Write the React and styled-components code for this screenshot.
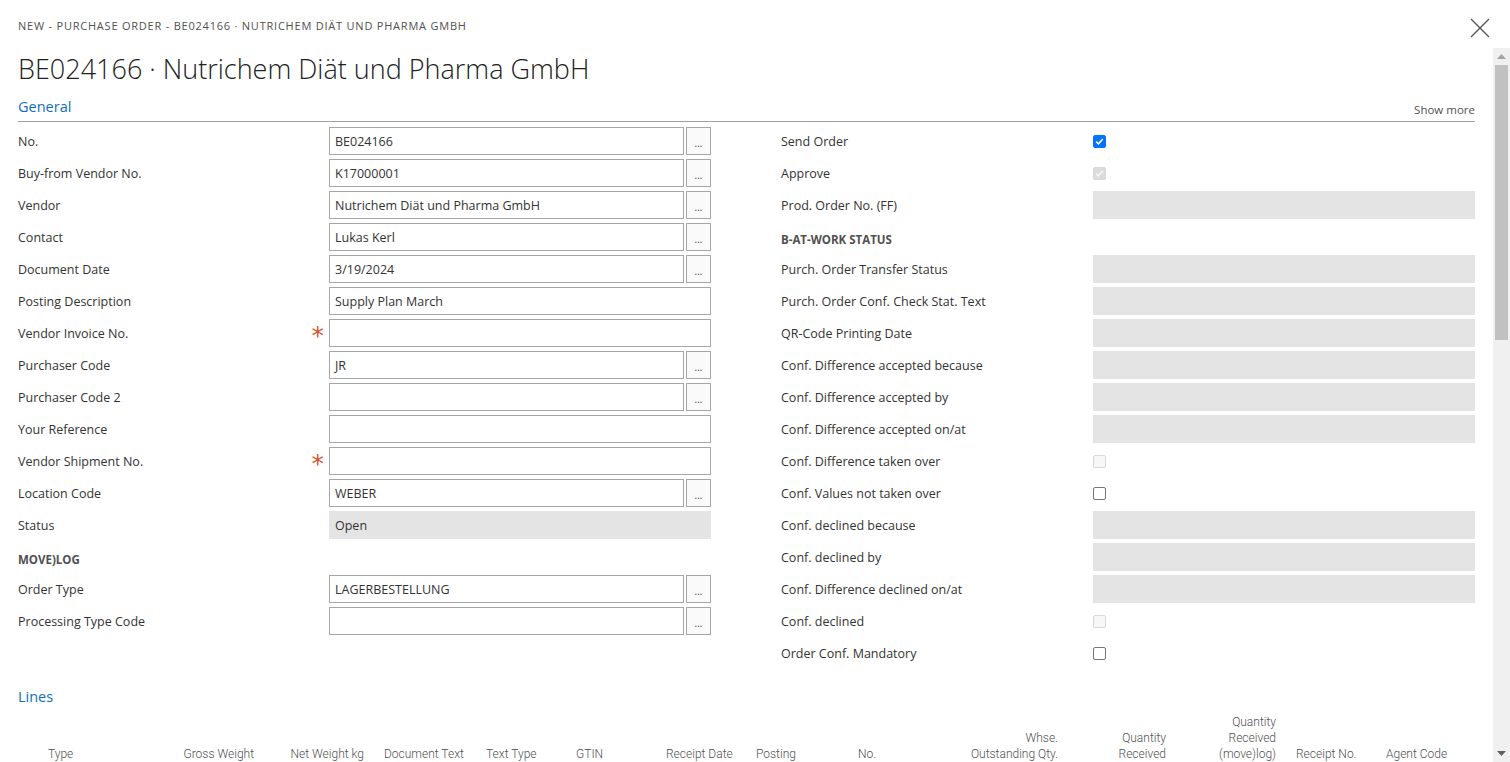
import React from "react";
import styled, { createGlobalStyle } from "styled-components";

const GlobalStyle = createGlobalStyle`
  html, body {
    margin: 0;
    padding: 0;
    background: #fff;
    overflow: hidden;
  }
  body {
    font-family: "Open Sans", "Noto Sans", sans-serif;
    color: #333;
  }
`;

const leftFields = [
  { label: "No.", value: "BE024166", lookup: true },
  { label: "Buy-from Vendor No.", value: "K17000001", lookup: true },
  { label: "Vendor", value: "Nutrichem Diät und Pharma GmbH", lookup: true },
  { label: "Contact", value: "Lukas Kerl", lookup: true },
  { label: "Document Date", value: "3/19/2024", lookup: true },
  { label: "Posting Description", value: "Supply Plan March" },
  { label: "Vendor Invoice No.", value: "", required: true },
  { label: "Purchaser Code", value: "JR", lookup: true },
  { label: "Purchaser Code 2", value: "", lookup: true },
  { label: "Your Reference", value: "" },
  { label: "Vendor Shipment No.", value: "", required: true },
  { label: "Location Code", value: "WEBER", lookup: true },
  { label: "Status", value: "Open", readOnly: true },
  { heading: "MOVE)LOG" },
  { label: "Order Type", value: "LAGERBESTELLUNG", lookup: true },
  { label: "Processing Type Code", value: "", lookup: true },
];

const rightFields = [
  { label: "Send Order", check: "checked" },
  { label: "Approve", check: "disabledChecked" },
  { label: "Prod. Order No. (FF)", readOnly: true },
  { heading: "B-AT-WORK STATUS" },
  { label: "Purch. Order Transfer Status", readOnly: true },
  { label: "Purch. Order Conf. Check Stat. Text", readOnly: true },
  { label: "QR-Code Printing Date", readOnly: true },
  { label: "Conf. Difference accepted because", readOnly: true },
  { label: "Conf. Difference accepted by", readOnly: true },
  { label: "Conf. Difference accepted on/at", readOnly: true },
  { label: "Conf. Difference taken over", check: "disabled" },
  { label: "Conf. Values not taken over", check: "unchecked" },
  { label: "Conf. declined because", readOnly: true },
  { label: "Conf. declined by", readOnly: true },
  { label: "Conf. Difference declined on/at", readOnly: true },
  { label: "Conf. declined", check: "disabled" },
  { label: "Order Conf. Mandatory", check: "unchecked" },
];

const columns = [
  { width: 20, lines: [] },
  { width: 132, lines: ["Type"] },
  { width: 94, lines: ["Gross Weight"], right: true },
  { width: 110, lines: ["Net Weight kg"], right: true },
  { width: 102, lines: ["Document Text"] },
  { width: 90, lines: ["Text Type"] },
  { width: 90, lines: ["GTIN"] },
  { width: 90, lines: ["Receipt Date"] },
  { width: 102, lines: ["Posting"] },
  { width: 110, lines: ["No."] },
  { width: 110, lines: ["Whse.", "Outstanding Qty."], right: true },
  { width: 108, lines: ["Quantity", "Received"], right: true },
  { width: 110, lines: ["Quantity", "Received", "(move)log)"], right: true },
  { width: 90, lines: ["Receipt No."] },
  { width: 99, lines: ["Agent Code"] },
];

function CheckMark({ color }) {
  return (
    <svg width="9" height="9" viewBox="0 0 9 9">
      <path d="M1.2 4.6 L3.5 6.8 L7.8 2" fill="none" stroke={color} strokeWidth="1.7" />
    </svg>
  );
}

function CheckBox({ state }) {
  return (
    <Box $state={state}>
      {state === "checked" && <CheckMark color="#fff" />}
      {state === "disabledChecked" && <CheckMark color="#f4f4f4" />}
    </Box>
  );
}

function FieldRow({ field, labelWidth }) {
  if (field.heading) {
    return <GroupHeading>{field.heading}</GroupHeading>;
  }
  return (
    <Row $label={labelWidth}>
      <Label>
        <span>{field.label}</span>
        {field.required && <Required>*</Required>}
      </Label>
      {field.check ? (
        <CheckCell>
          <CheckBox state={field.check} />
        </CheckCell>
      ) : field.readOnly ? (
        <ReadOnlyBox>{field.value}</ReadOnlyBox>
      ) : (
        <InputWrap>
          <TextBox>{field.value}</TextBox>
          {field.lookup && <LookupButton>...</LookupButton>}
        </InputWrap>
      )}
    </Row>
  );
}

export default function App() {
  return (
    <>
      <GlobalStyle />
      <Dialog>
        <TopBar>
          <Breadcrumb>NEW - PURCHASE ORDER - BE024166 · NUTRICHEM DIÄT UND PHARMA GMBH</Breadcrumb>
          <CloseButton aria-label="Close">
            <svg width="20" height="20" viewBox="0 0 20 20">
              <path d="M1 1 L19 19 M19 1 L1 19" stroke="#555" strokeWidth="1.4" fill="none" />
            </svg>
          </CloseButton>
        </TopBar>
        <Body>
          <Content>
            <Title>BE024166 · Nutrichem Diät und Pharma GmbH</Title>
            <SectionHeader>
              <SectionTitle>General</SectionTitle>
              <ShowMore>Show more</ShowMore>
            </SectionHeader>
            <FormGrid>
              <Column>
                {leftFields.map((f, i) => (
                  <FieldRow key={i} field={f} labelWidth={311} />
                ))}
              </Column>
              <Column>
                {rightFields.map((f, i) => (
                  <FieldRow key={i} field={f} labelWidth={312} />
                ))}
              </Column>
            </FormGrid>
            <LinesTitle>Lines</LinesTitle>
            <HeaderRow $cols={columns.map((c) => c.width + "px").join(" ")}>
              {columns.map((c, i) => (
                <HeaderCell key={i} $right={c.right}>
                  {c.lines.map((l, j) => (
                    <div key={j}>{l}</div>
                  ))}
                </HeaderCell>
              ))}
            </HeaderRow>
          </Content>
          <Scrollbar>
            <ScrollArrow>
              <svg width="9" height="5" viewBox="0 0 9 5">
                <path d="M0 5 L4.5 0 L9 5 Z" fill="#a3a3a3" />
              </svg>
            </ScrollArrow>
            <Thumb />
            <Track />
            <ScrollArrow>
              <svg width="9" height="5" viewBox="0 0 9 5">
                <path d="M0 0 L4.5 5 L9 0 Z" fill="#606060" />
              </svg>
            </ScrollArrow>
          </Scrollbar>
        </Body>
      </Dialog>
    </>
  );
}

const Dialog = styled.div`
  width: 1510px;
  height: 762px;
  display: flex;
  flex-direction: column;
  overflow: hidden;
`;

const TopBar = styled.div`
  height: 48px;
  display: flex;
  align-items: flex-start;
  justify-content: space-between;
  padding: 0 0 0 18px;
  flex-shrink: 0;
`;

const Breadcrumb = styled.div`
  margin-top: 18px;
  font-size: 11px;
  letter-spacing: 0.78px;
  color: #505050;
  line-height: 16px;
`;

const CloseButton = styled.div`
  margin: 18px 20px 0 0;
  width: 20px;
  height: 20px;
`;

const Body = styled.div`
  flex: 1;
  display: flex;
  min-height: 0;
`;

const Content = styled.div`
  flex: 1;
  padding: 0 18px 0 18px;
  overflow: hidden;
`;

const Title = styled.h1`
  margin: 0;
  padding-top: 3px;
  height: 41px;
  font-size: 27px;
  font-weight: 300;
  line-height: 36px;
  color: #212121;
  white-space: nowrap;
`;

const SectionHeader = styled.div`
  display: flex;
  justify-content: space-between;
  align-items: flex-end;
  height: 30px;
  border-bottom: 1px solid #a0a0a0;
  box-sizing: border-box;
  margin-bottom: 5px;
`;

const SectionTitle = styled.div`
  font-size: 14.5px;
  color: #106ebe;
  line-height: 20px;
  margin-bottom: 4px;
`;

const ShowMore = styled.div`
  font-size: 11.5px;
  color: #505050;
  margin-bottom: 4px;
`;

const FormGrid = styled.div`
  display: grid;
  grid-template-columns: 693px 694px;
  column-gap: 70px;
  align-items: start;
`;

const Column = styled.div`
  display: flex;
  flex-direction: column;
  gap: 4px;
`;

const Row = styled.div`
  display: grid;
  grid-template-columns: ${(p) => p.$label}px 1fr;
  height: 28px;
  align-items: center;
`;

const Label = styled.div`
  display: flex;
  justify-content: space-between;
  align-items: center;
  font-size: 12.5px;
  color: #333;
  white-space: nowrap;
`;

const Required = styled.span`
  color: #d9542e;
  font-size: 25px;
  line-height: 20px;
  height: 20px;
  margin-right: 5px;
  padding-top: 6px;
  font-family: "DejaVu Sans", sans-serif;
`;

const GroupHeading = styled.div`
  height: 28px;
  line-height: 33px;
  font-size: 11.5px;
  font-weight: 700;
  color: #505050;
`;

const InputWrap = styled.div`
  display: flex;
  gap: 2px;
  height: 28px;
`;

const TextBox = styled.div`
  flex: 1;
  box-sizing: border-box;
  border: 1px solid #a6a6a6;
  padding: 0 5px;
  font-size: 12.5px;
  line-height: 28px;
  color: #333;
  white-space: nowrap;
  overflow: hidden;
`;

const LookupButton = styled.div`
  width: 25px;
  box-sizing: border-box;
  border: 1px solid #a6a6a6;
  background: #fafafa;
  font-size: 10px;
  color: #444;
  text-align: center;
  line-height: 30px;
`;

const ReadOnlyBox = styled.div`
  height: 28px;
  background: #e4e4e4;
  padding: 0 6px;
  font-size: 12.5px;
  line-height: 29px;
  color: #333;
`;

const CheckCell = styled.div`
  display: flex;
  align-items: center;
  height: 28px;
`;

const Box = styled.span`
  width: 13px;
  height: 13px;
  box-sizing: border-box;
  border-radius: 2px;
  display: inline-flex;
  align-items: center;
  justify-content: center;
  border: 1px solid
    ${(p) =>
      p.$state === "checked"
        ? "#0075ff"
        : p.$state === "unchecked"
        ? "#767676"
        : "#d9d9d9"};
  background: ${(p) =>
    p.$state === "checked"
      ? "#0075ff"
      : p.$state === "disabledChecked"
      ? "#dcdcdc"
      : p.$state === "disabled"
      ? "#f7f7f7"
      : "#fff"};
`;

const LinesTitle = styled.div`
  margin-top: 19px;
  font-size: 14.5px;
  color: #106ebe;
  line-height: 22px;
`;

const HeaderRow = styled.div`
  display: grid;
  grid-template-columns: ${(p) => p.$cols};
  align-items: end;
  margin-top: 6px;
`;

const HeaderCell = styled.div`
  padding: 0 10px;
  text-align: ${(p) => (p.$right ? "right" : "left")};
  font-family: Roboto, "Liberation Sans", sans-serif;
  font-weight: 300;
  font-size: 12px;
  line-height: 16px;
  color: #505050;
  white-space: nowrap;
`;

const Scrollbar = styled.div`
  width: 17px;
  background: #f0f0f0;
  display: flex;
  flex-direction: column;
  align-items: center;
`;

const ScrollArrow = styled.div`
  height: 17px;
  display: flex;
  align-items: center;
  justify-content: center;
`;

const Thumb = styled.div`
  width: 13px;
  height: 275px;
  background: #c1c1c1;
`;

const Track = styled.div`
  flex: 1;
`;
